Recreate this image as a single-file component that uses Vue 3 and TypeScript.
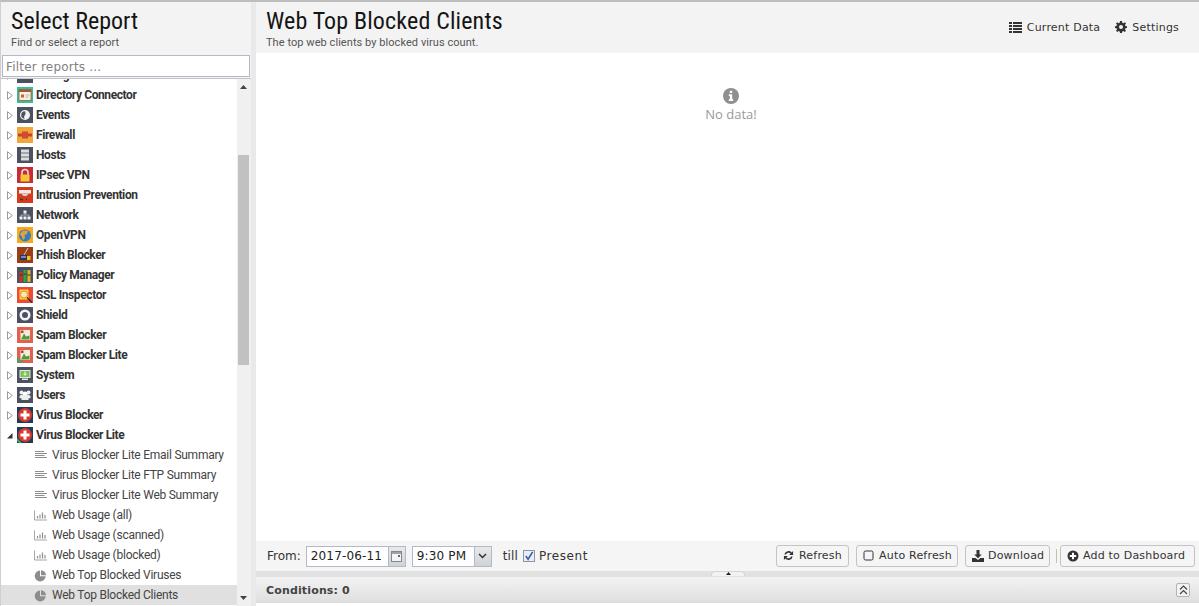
<script setup lang="ts">
interface Cat { name: string; kind: string; open?: boolean }
const cats: Cat[] = [
  { name: 'Configuration', kind: 'config' },
  { name: 'Directory Connector', kind: 'dir' },
  { name: 'Events', kind: 'events' },
  { name: 'Firewall', kind: 'firewall' },
  { name: 'Hosts', kind: 'hosts' },
  { name: 'IPsec VPN', kind: 'ipsec' },
  { name: 'Intrusion Prevention', kind: 'ips' },
  { name: 'Network', kind: 'network' },
  { name: 'OpenVPN', kind: 'openvpn' },
  { name: 'Phish Blocker', kind: 'phish' },
  { name: 'Policy Manager', kind: 'policy' },
  { name: 'SSL Inspector', kind: 'ssl' },
  { name: 'Shield', kind: 'shield' },
  { name: 'Spam Blocker', kind: 'spam' },
  { name: 'Spam Blocker Lite', kind: 'spamlite' },
  { name: 'System', kind: 'system' },
  { name: 'Users', kind: 'users' },
  { name: 'Virus Blocker', kind: 'virus' },
  { name: 'Virus Blocker Lite', kind: 'viruslite', open: true }
]
const reports = [
  { name: 'Virus Blocker Lite Email Summary', icon: 'text' },
  { name: 'Virus Blocker Lite FTP Summary', icon: 'text' },
  { name: 'Virus Blocker Lite Web Summary', icon: 'text' },
  { name: 'Web Usage (all)', icon: 'bar' },
  { name: 'Web Usage (scanned)', icon: 'bar' },
  { name: 'Web Usage (blocked)', icon: 'bar' },
  { name: 'Web Top Blocked Viruses', icon: 'pie' },
  { name: 'Web Top Blocked Clients', icon: 'pie', selected: true }
]
</script>

<template>
  <div class="app">
    <aside class="left">
      <header class="left-head">
        <h1 class="title">Select Report</h1>
        <p class="sub">Find or select a report</p>
      </header>
      <div class="filter-wrap"><input class="filter" placeholder="Filter reports ..." /></div>
      <div class="tree-wrap">
        <div class="tree">
          <div class="tree-list">
            <div v-for="c in cats" :key="c.name" class="row cat">
              <svg v-if="!c.open" class="arrow" width="6" height="9" viewBox="0 0 6 9"><path d="M.5.7 5.300 4.500.5 8.300Z" fill="#fff" stroke="#9a9a9a" /></svg>
              <svg v-else class="arrow" width="6" height="9" viewBox="0 0 6 9"><path d="M0 7.500 5.500 2V7.500Z" fill="#333" /></svg>
              <svg class="ico" width="16" height="16" viewBox="0 0 16 16">
                <template v-if="c.kind === 'config'"><rect width="16" height="16" fill="#4c5161" /></template>
                <template v-else-if="c.kind === 'dir'">
                  <rect width="16" height="16" fill="#2dc3a0" /><rect x="2" y="2.500" width="12" height="11" fill="#f6eede" stroke="#b5562f" stroke-width=".8" /><rect x="2" y="2.500" width="12" height="2.500" fill="#a9552f" /><rect x="4" y="7.500" width="3" height="3" fill="#d9553b" /><path d="M8.500 8h4M8.500 10h3" stroke="#b9b0a0" />
                </template>
                <template v-else-if="c.kind === 'events'">
                  <rect width="16" height="16" fill="#4c5161" /><circle cx="8" cy="8" r="5" fill="#f2f2f2" /><path d="M8 4.200a3.800 3.800 0 0 0 0 7.600c-1.500-1-1-2.600 0-3.800 1-1.400.4-3 0-3.800Z" fill="#4c5161" />
                </template>
                <template v-else-if="c.kind === 'firewall'">
                  <rect width="16" height="16" fill="#f0a63a" /><rect x="1" y="6.500" width="14" height="3" fill="#c8432c" /><rect x="5" y="4.500" width="6" height="7" fill="#d24a2e" />
                </template>
                <template v-else-if="c.kind === 'hosts'">
                  <rect width="16" height="16" fill="#4c5161" /><rect x="4" y="2.500" width="8" height="11" fill="#dcdcdc" /><path d="M4 6h8M4 10h8" stroke="#6c7080" />
                </template>
                <template v-else-if="c.kind === 'ipsec'">
                  <rect width="16" height="16" fill="#c72a3a" /><path d="M5 8V5.500a3 3 0 0 1 6 0V8" fill="none" stroke="#e8e4d8" stroke-width="1.500" /><rect x="3.500" y="7.500" width="9" height="7" fill="#f5c533" />
                </template>
                <template v-else-if="c.kind === 'ips'">
                  <rect width="16" height="16" fill="#d83a1e" /><rect x="2" y="3" width="12" height="3.500" fill="#f1e9e4" /><path d="M4 6.500h8L9.500 9h-3Z" fill="#d9d0ca" /><path d="M3 12.500h3M9 12.500h1" stroke="#333" stroke-width="1.500" />
                </template>
                <template v-else-if="c.kind === 'network'">
                  <rect width="16" height="16" fill="#4c5161" /><rect x="6.500" y="3.500" width="3" height="3" fill="#f2f2f2" /><rect x="2.500" y="9.500" width="3" height="3" fill="#f2f2f2" /><rect x="6.500" y="9.500" width="3" height="3" fill="#f2f2f2" /><rect x="10.500" y="9.500" width="3" height="3" fill="#f2f2f2" /><path d="M8 6.500V8M4 9.500V8h8v1.500" fill="none" stroke="#d0d0d0" stroke-width=".7" />
                </template>
                <template v-else-if="c.kind === 'openvpn'">
                  <rect width="16" height="16" fill="#f7a81b" /><circle cx="8" cy="8.500" r="6" fill="#2f7fc1" /><path d="M6 3.500 11 3.700 10 7 7.500 8 8 11 6 13 4.500 9 2.500 7.500Z" fill="#e8a03a" />
                </template>
                <template v-else-if="c.kind === 'phish'">
                  <rect width="16" height="16" fill="#9c3d17" /><path d="M11 1 7 8" stroke="#d8c8b8" /><rect x="3" y="8" width="7" height="5" fill="#26355e" /><rect x="10" y="9" width="3.500" height="4" fill="#f0c22c" /><path d="M4 10h5" stroke="#dde" />
                </template>
                <template v-else-if="c.kind === 'policy'">
                  <rect width="16" height="16" fill="#4c5161" /><rect x="2.500" y="5" width="3" height="10" fill="#c8322b" /><rect x="6.500" y="3" width="3" height="12" fill="#37a13c" /><rect x="10.500" y="3" width="3" height="12" fill="#e1b42a" /><path d="M2.500 8h3M6.500 7h3M10.500 8h3" stroke="#333" />
                </template>
                <template v-else-if="c.kind === 'ssl'">
                  <rect width="16" height="16" fill="#ee4b35" /><rect x="2.500" y="2.500" width="9" height="10" fill="#f6d43c" /><circle cx="7" cy="7.500" r="3.500" fill="#f9e9b8" stroke="#e88a2a" /><path d="M10 10.500l5 5" stroke="#2b2b2b" stroke-width="1.300" />
                </template>
                <template v-else-if="c.kind === 'shield'">
                  <rect width="16" height="16" fill="#4c5161" /><circle cx="8" cy="8" r="5.500" fill="#f4f4f4" /><circle cx="8" cy="8" r="3" fill="#4c5161" />
                </template>
                <template v-else-if="c.kind === 'spam' || c.kind === 'spamlite'">
                  <rect width="16" height="16" fill="#e2604f" /><rect x="3.500" y="3" width="9.500" height="10" fill="#f3ecd8" /><path d="M4 12.500 7 6.500 9 9.500 12.500 8.500V12.500Z" fill="#4e9a3c" /><rect x="4" y="3.500" width="2.500" height="2.500" fill="#c8392c" />
                  <path v-if="c.kind === 'spamlite'" d="M0 10 6 16H2.500L0 13.500Z" fill="#3fa660" />
                </template>
                <template v-else-if="c.kind === 'system'">
                  <rect width="16" height="16" fill="#4c5161" /><rect x="3" y="3.500" width="10" height="7" fill="#7cc24e" stroke="#e4e4e4" /><path d="M8 4.500v3.500M6.500 6.700 8 8.300 9.500 6.700" stroke="#fff" fill="none" /><rect x="5" y="11.500" width="6" height="1.500" fill="#e4e4e4" />
                </template>
                <template v-else-if="c.kind === 'users'">
                  <rect width="16" height="16" fill="#4c5161" /><circle cx="4.500" cy="5.500" r="2" fill="#eee" /><circle cx="11.500" cy="5.500" r="2" fill="#eee" /><circle cx="8" cy="7" r="2.500" fill="#fff" /><path d="M2.500 9.500c0-1 1-1.500 2.500-1.500h6c1.500 0 2.500.5 2.500 1.500v1.500l-2 .5v1.500h-7V11.500l-2-.5Z" fill="#eee" />
                </template>
                <template v-else>
                  <rect width="16" height="16" fill="#1e3a5c" /><circle cx="8" cy="8" r="7" fill="#d8392f" /><path d="M6.500 3.500h3v3h3v3h-3v3h-3v-3h-3v-3h3Z" fill="#fff" />
                  <path v-if="c.kind === 'viruslite'" d="M0 11 5 16H2L0 14Z" fill="#3fa660" />
                </template>
              </svg>
              <span class="cat-name">{{ c.name }}</span>
            </div>
            <div v-for="r in reports" :key="r.name" class="row leaf" :class="{ selected: r.selected }">
              <svg class="leaf-ico" width="13" height="13" viewBox="0 0 13 13">
                <path v-if="r.icon === 'text'" d="M1 2.500h9M1 4.500h12M1 6.500h9.500M1 8.500h12" stroke="#8d8d8d" fill="none" />
                <template v-else-if="r.icon === 'bar'">
                  <path d="M.5 1.500v9.500h12.500" stroke="#a5a5a5" fill="none" />
                  <path d="M3.500 9.500V7M6 9.500V5.500M8.500 9.500V3.500M11 9.500V6" stroke="#8f8f8f" stroke-width="1.200" fill="none" />
                </template>
                <template v-else>
                  <path d="M6 1.500A5.500 5.500 0 1 0 11.700 7.300H6Z" fill="#8d8d8d" />
                  <path d="M7 1.200A5 5 0 0 1 12 6.300H7Z" fill="#8d8d8d" />
                </template>
              </svg>
              <span class="leaf-name">{{ r.name }}</span>
            </div>
          </div>
        </div>
        <div class="scrollbar">
          <svg class="sb-arrow up" width="7" height="4" viewBox="0 0 7 4"><path d="M3.500 0 7 4H0Z" fill="#444" /></svg>
          <div class="thumb"></div>
          <svg class="sb-arrow down" width="7" height="4" viewBox="0 0 7 4"><path d="M0 0H7L3.500 4Z" fill="#444" /></svg>
        </div>
      </div>
    </aside>

    <main class="right">
      <header class="right-head">
        <div>
          <h1 class="title">Web Top Blocked Clients</h1>
          <p class="sub">The top web clients by blocked virus count.</p>
        </div>
        <div class="head-tools">
          <span class="tool">
            <svg width="13" height="11" viewBox="0 0 13 11"><path d="M0 0h3v2H0ZM4 0h9v2H4ZM0 3h3v2H0ZM4 3h9v2H4ZM0 6h3v2H0ZM4 6h9v2H4ZM0 9h3v2H0ZM4 9h9v2H4Z" fill="#333" /></svg>
            Current Data
          </span>
          <span class="tool">
            <svg width="12" height="12" viewBox="0 0 12 12"><path d="M5 0h2l.3 1.700 1.100.5L9.900 1.200 11 2.400 10 3.800l.4 1.100L12 5.200v1.800l-1.600.3-.4 1.100 1 1.400-1.200 1.200-1.400-1-1.100.4L7 12H5l-.3-1.600-1.100-.4-1.400 1-1.200-1.200 1-1.400-.5-1.100L0 7V5.200l1.500-.3.500-1.100-1-1.400 1.200-1.200 1.400 1 1.100-.5ZM6 4a2 2 0 1 0 0 4 2 2 0 0 0 0-4Z" fill="#333" fill-rule="evenodd" /></svg>
            Settings
          </span>
        </div>
      </header>

      <section class="content">
        <svg width="16" height="16" viewBox="0 0 16 16"><circle cx="8" cy="8" r="8" fill="#8f8f8f" /><path d="M6.800 2.800h2.400v2.200H6.800ZM5.800 6.300h3.400v5h1v1.800H5.800v-1.800h1v-3.200h-1Z" fill="#fff" /></svg>
        <div class="nodata">No data!</div>
      </section>

      <div class="toolbar">
        <span class="lbl">From:</span>
        <span class="field date"><span class="field-text">2017-06-11</span><span class="trig">
          <svg width="11" height="11" viewBox="0 0 11 11"><rect x=".5" y=".5" width="10" height="10" fill="#f4f4f4" stroke="#808890" /><rect x="1" y="1" width="9" height="2" fill="#9aa2aa" /><rect x="7" y="4" width="2" height="2" fill="#667" /></svg>
        </span></span>
        <span class="field time"><span class="field-text">9:30 PM</span><span class="trig">
          <svg width="9" height="6" viewBox="0 0 9 6"><path d="M1 1 4.500 4.500 8 1" fill="none" stroke="#333" stroke-width="1.500" /></svg>
        </span></span>
        <span class="till">till</span>
        <span class="check"><svg width="10" height="10" viewBox="0 0 11 11"><path d="M2 5.500 4.500 9 9.500 1" fill="none" stroke="#3c5ea8" stroke-width="1.800" /></svg></span>
        <span class="present">Present</span>
        <span class="spacer"></span>
        <button class="btn w-refresh">
          <svg width="11" height="11" viewBox="0 0 12 12"><path d="M1.500 5A4.600 4.600 0 0 1 9.500 2.700L11 1.200V5.500H6.700L8.300 3.900A3 3 0 0 0 3.200 5ZM10.500 7A4.600 4.600 0 0 1 2.500 9.300L1 10.800V6.500H5.300L3.700 8.100A3 3 0 0 0 8.800 7Z" fill="#333" /></svg>
          Refresh
        </button>
        <button class="btn w-auto">
          <svg width="11" height="11" viewBox="0 0 11 11"><rect x="1" y="1" width="9" height="9" rx="1.500" fill="none" stroke="#333" /></svg>
          Auto Refresh
        </button>
        <button class="btn w-down">
          <svg class="wide" width="12" height="12" viewBox="0 0 12 12"><path d="M4.500 0h3v4.500h2.300L6 8.300 2.200 4.500h2.300ZM0 8h3.500L6 10l2.500-2H12v4H0Z" fill="#333" /></svg>
          Download
        </button>
        <span class="sep"></span>
        <button class="btn w-add">
          <svg class="wide" width="12" height="12" viewBox="0 0 12 12"><circle cx="6" cy="6" r="5.500" fill="#333" /><path d="M5 2.800h2V5h2.200v2H7v2.200H5V7H2.800V5H5Z" fill="#fff" /></svg>
          Add to Dashboard
        </button>
      </div>

      <div class="splitter">
        <div class="split-tab"><svg width="5" height="3" viewBox="0 0 5 3"><path d="M2.500 0 5 3H0Z" fill="#222" /></svg></div>
      </div>

      <div class="conditions">
        <span class="cond-text">Conditions: 0</span>
        <span class="cond-btn">
          <svg width="9" height="10" viewBox="0 0 9 10"><path d="M1 4.500 4.500 1 8 4.500M1 9 4.500 5.500 8 9" fill="none" stroke="#444" stroke-width="1.200" /></svg>
        </span>
      </div>
    </main>
  </div>
</template>

<style>
html, body { margin: 0; overflow: hidden; }
</style>

<style scoped>
.app {
  width: 1199px;
  height: 606px;
  display: flex;
  background: #e9e9e9;
  box-sizing: border-box;
  border-top: 2px solid #bdbdbd;
  border-left: 1px solid #cfcfcf;
  overflow: hidden;
  font-family: "DejaVu Sans", sans-serif;
  color: #333;
}
.left {
  width: 250px;
  flex: none;
  display: flex;
  flex-direction: column;
  background: #f3f3f3;
}
.left-head { height: 51px; padding-left: 10px; box-sizing: border-box; }
.title {
  margin: 0;
  font-family: Roboto, sans-serif;
  font-stretch: condensed;
  font-weight: 400;
  font-size: 24px;
  line-height: 28px;
  padding-top: 5px;
  color: #151515;
}
.right-head .title { letter-spacing: .15px; }
.sub {
  margin: 1px 0 0;
  font-family: Roboto, sans-serif;
  font-size: 11px;
  line-height: 13px;
  color: #555;
  letter-spacing: .06px;
}
.filter-wrap { height: 26px; box-sizing: border-box; padding: 2px 0 0 1px; border-bottom: 1px solid #c4c4c4; background: #f3f3f3; }
.filter {
  display: block;
  width: 248px;
  height: 22px;
  box-sizing: border-box;
  border: 1px solid #b5b8c8;
  padding: 1px 3px 0;
  font-family: "DejaVu Sans", sans-serif;
  font-size: 12px;
  letter-spacing: .2px;
  outline: none;
}
.filter::placeholder { color: #808080; opacity: 1; }
.tree-wrap { flex: 1; min-height: 0; display: flex; background: #fff; }
.tree { flex: 1; min-width: 0; overflow: hidden; }
.tree-list { margin-top: -14px; }
.row { height: 20px; display: flex; align-items: center; font-family: Roboto, sans-serif; font-size: 12px; color: #333; }
.cat { padding-left: 6px; }
.arrow { width: 6px; flex: none; }
.ico { margin-left: 4px; flex: none; }
.cat-name { margin-left: 3px; font-weight: 700; letter-spacing: -.4px; }
.leaf { padding-left: 33px; }
.leaf-ico { flex: none; }
.leaf-name { margin-left: 5px; letter-spacing: -.25px; color: #444; }
.selected { background: #e0e0e0; }
.scrollbar { width: 14px; flex: none; background: #f0f0f0; position: relative; }
.thumb { position: absolute; left: 1px; right: 2px; top: 76px; height: 210px; background: #c1c1c1; }
.sb-arrow { position: absolute; left: 3px; }
.up { top: 6px; }
.down { bottom: 6px; }

.right { flex: 1; min-width: 0; margin-left: 5px; display: flex; flex-direction: column; background: #fff; }
.right-head {
  height: 51px;
  flex: none;
  background: #f3f3f3;
  display: flex;
  justify-content: space-between;
  padding: 0 20px 0 10px;
}
.head-tools { display: flex; gap: 15px; padding-top: 18px; height: 14px; }
.tool { display: flex; align-items: center; gap: 5px; font-size: 11px; letter-spacing: .2px; color: #333; }
.content { flex: 1; min-height: 0; display: flex; flex-direction: column; align-items: center; padding: 35px 0 0 7px; background: #fff; }
.nodata { font-family: "Open Sans", sans-serif; font-size: 13px; color: #9a9a9a; margin-top: 1px; line-height: 18px; }
.toolbar {
  height: 30px;
  flex: none;
  background: #f5f5f5;
  display: flex;
  align-items: center;
  padding: 0 4px 0 11px;
  font-size: 12px;
  color: #333;
}
.lbl { margin-right: 5px; }
.field { display: flex; height: 21px; box-sizing: border-box; border: 1px solid #b5b8c8; background: #fff; align-items: stretch; }
.field-text { flex: 1; padding-left: 4px; line-height: 19px; font-size: 12px; letter-spacing: .15px; color: #222; }
.date { width: 100px; margin-right: 6px; }
.time { width: 80px; }
.trig { width: 16px; background: linear-gradient(#e9e9e9, #cfd2d6); border-left: 1px solid #b5b8c8; display: flex; align-items: center; justify-content: center; }
.till { margin-left: 11px; letter-spacing: .1px; }
.check { width: 10px; height: 10px; border: 1px solid #8d97a8; margin-left: 5px; background: #e8eef6; display: block; }
.check svg { display: block; }
.present { margin-left: 4px; letter-spacing: .6px; }
.spacer { flex: 1; }
.btn {
  height: 22px;
  padding: 0 0 1px 6px;
  margin-left: 7px;
  box-sizing: border-box;
  display: flex;
  align-items: center;
  justify-content: flex-start;
  gap: 5px;
  background: #f5f5f5;
  border: 1px solid #c4c4c4;
  border-radius: 3px;
  font-family: "DejaVu Sans", sans-serif;
  font-size: 11px;
  letter-spacing: .2px;
  color: #333;
  white-space: nowrap;
}
.btn .wide { margin-right: -1px; }
.w-refresh { width: 73px; }
.w-auto { width: 102px; }
.w-down { width: 85px; }
.w-add { width: 135px; }
.sep { width: 1px; height: 14px; background: #c9bfa9; margin-left: 6px; margin-right: -4px; }
.splitter { height: 6px; flex: none; background: #e2e2e2; position: relative; }
.split-tab { position: absolute; left: 455px; top: 0; width: 34px; height: 5px; box-sizing: border-box; background: #f2f2f2; border: 1px solid #d4d4d4; border-bottom: 0; border-radius: 4px 4px 0 0; display: flex; justify-content: center; }
.split-tab svg { display: block; }
.conditions {
  height: 26px;
  flex: none;
  margin-bottom: 3px;
  background: linear-gradient(#f3f3f3, #dedede);
  display: flex;
  align-items: center;
  justify-content: space-between;
  padding: 0 9px 0 10px;
}
.cond-text { font-size: 11px; font-weight: 700; letter-spacing: .15px; color: #444; }
.cond-btn { width: 12px; height: 12px; border: 1px solid #b4b4b4; border-radius: 2px; display: flex; align-items: center; justify-content: center; background: #f2f2f2; }
</style>
